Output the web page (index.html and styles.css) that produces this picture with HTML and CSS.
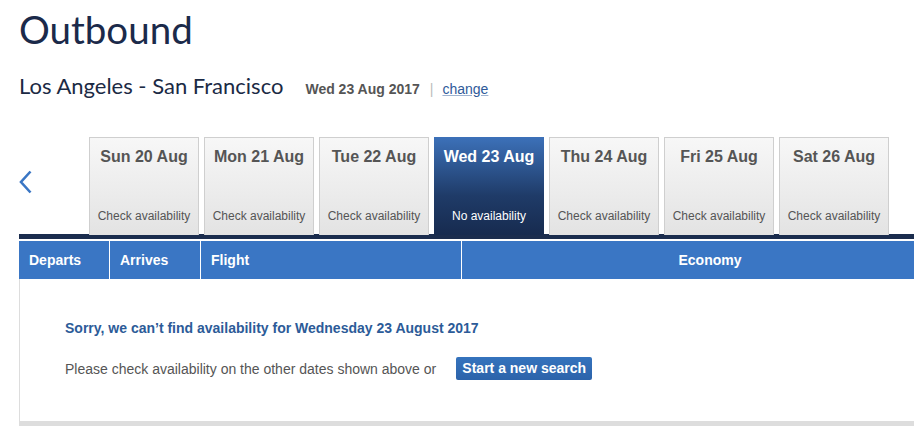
FILE: index.html
```html
<!DOCTYPE html>
<html lang="en">
<head>
<meta charset="utf-8">
<title>Outbound</title>
<link rel="stylesheet" href="styles.css">
</head>
<body>
<div class="page">
  <h1 class="title">Outbound</h1>
  <div class="route-row">
    <span class="route">Los Angeles - San Francisco</span>
    <span class="route-date">Wed 23 Aug 2017</span>
    <span class="sep">|</span>
    <a class="change" href="#">change</a>
  </div>

  <div class="date-nav">
    <div class="prev">
      <svg width="14" height="24" viewBox="0 0 14 24"><path d="M11.5 1.5 L2 12 L11.5 22.5" fill="none" stroke="#3a76c4" stroke-width="2.6"/></svg>
    </div>
    <div class="tabs">
      <div class="tab"><div class="tab-day">Sun 20 Aug</div><div class="tab-note">Check availability</div></div>
      <div class="tab"><div class="tab-day">Mon 21 Aug</div><div class="tab-note">Check availability</div></div>
      <div class="tab"><div class="tab-day">Tue 22 Aug</div><div class="tab-note">Check availability</div></div>
      <div class="tab active"><div class="tab-day">Wed 23 Aug</div><div class="tab-note">No availability</div></div>
      <div class="tab"><div class="tab-day">Thu 24 Aug</div><div class="tab-note">Check availability</div></div>
      <div class="tab"><div class="tab-day">Fri 25 Aug</div><div class="tab-note">Check availability</div></div>
      <div class="tab"><div class="tab-day">Sat 26 Aug</div><div class="tab-note">Check availability</div></div>
    </div>
  </div>
  <div class="dark-bar"></div>

  <div class="results">
    <div class="thead">
      <div class="th col-dep">Departs</div>
      <div class="th col-arr">Arrives</div>
      <div class="th col-flt">Flight</div>
      <div class="th col-eco">Economy</div>
    </div>
    <div class="tbody">
      <p class="sorry">Sorry, we can’t find availability for Wednesday 23 August 2017</p>
      <div class="suggest">
        <span>Please check availability on the other dates shown above or</span>
        <a class="btn" href="#">Start a new search</a>
      </div>
    </div>
  </div>
</div>
</body>
</html>
```

FILE: styles.css
```css
html, body {
  margin: 0;
  padding: 0;
  background: #fff;
  overflow: hidden;
}

.page {
  width: 939px;
  padding-left: 19px;
  font-family: "Liberation Sans", Arial, sans-serif;
}

.title {
  margin: 0;
  padding-top: 6px;
  font-family: Lato, "Open Sans", sans-serif;
  font-weight: 400;
  font-size: 38.5px;
  line-height: 46px;
  color: #1b2a4a;
}

.route-row {
  display: flex;
  align-items: baseline;
  margin-top: 20px;
  height: 28px;
}

.route {
  font-family: Lato, "Open Sans", sans-serif;
  font-size: 22px;
  color: #1b2a44;
}

.route-date {
  margin-left: 22px;
  font-size: 14px;
  font-weight: bold;
  color: #555;
}

.sep {
  margin: 0 9px 0 10px;
  font-size: 14px;
  color: #bbb;
}

.change {
  font-size: 14px;
  color: #2f5a9a;
  text-decoration: underline;
  text-decoration-color: #9fb3d0;
}

.date-nav {
  display: flex;
  margin-top: 37px;
  height: 98px;
}

.prev {
  width: 70px;
  display: flex;
  align-items: flex-start;
  padding-top: 33px;
  box-sizing: border-box;
}

.tabs {
  display: flex;
  gap: 5px;
}

.tab {
  width: 110px;
  height: 98px;
  box-sizing: border-box;
  border: 1px solid #cfcfcf;
  border-bottom: 0;
  background: linear-gradient(#f7f7f7, #e3e3e3);
  display: flex;
  flex-direction: column;
  align-items: center;
  justify-content: space-between;
  padding: 10px 0 12px;
}

.tab-day {
  font-size: 16px;
  font-weight: bold;
  color: #555;
}

.tab-note {
  font-size: 12px;
  color: #555;
}

.tab.active {
  border: 0;
  background: linear-gradient(#3c71b9, #1f3b68 60%, #172b4f);
  padding-top: 11px;
}

.tab.active .tab-day,
.tab.active .tab-note {
  color: #fff;
}

.dark-bar {
  height: 5px;
  background: #1b2d4e;
  margin-top: -1px;
}

.results {
  margin-top: 2px;
}

.thead {
  display: flex;
  height: 38px;
  background: #3a76c4;
}

.th {
  box-sizing: border-box;
  color: #fff;
  font-size: 14px;
  font-weight: bold;
  line-height: 38px;
  padding-left: 10px;
  border-right: 1px solid #fff;
}

.col-dep { width: 91px; }
.col-arr { width: 91px; }
.col-flt { width: 261px; }
.col-eco {
  flex: 1;
  border-right: 0;
  padding-left: 0;
  text-align: center;
}

.tbody {
  border-left: 1px solid #ddd;
  border-bottom: 5px solid #ddd;
  height: 147px;
  padding: 41px 0 0 45px;
  box-sizing: border-box;
}

.sorry {
  margin: 0;
  font-size: 14px;
  font-weight: bold;
  color: #2c5b98;
}

.suggest {
  display: flex;
  align-items: center;
  margin-top: 21px;
  font-size: 14px;
  color: #555;
}

.btn {
  margin-left: 20px;
  width: 136px;
  height: 23px;
  line-height: 23px;
  text-align: center;
  border-radius: 2px;
  background: linear-gradient(#3573bd, #2c63aa);
  color: #fff;
  font-weight: bold;
  text-decoration: none;
}
```
